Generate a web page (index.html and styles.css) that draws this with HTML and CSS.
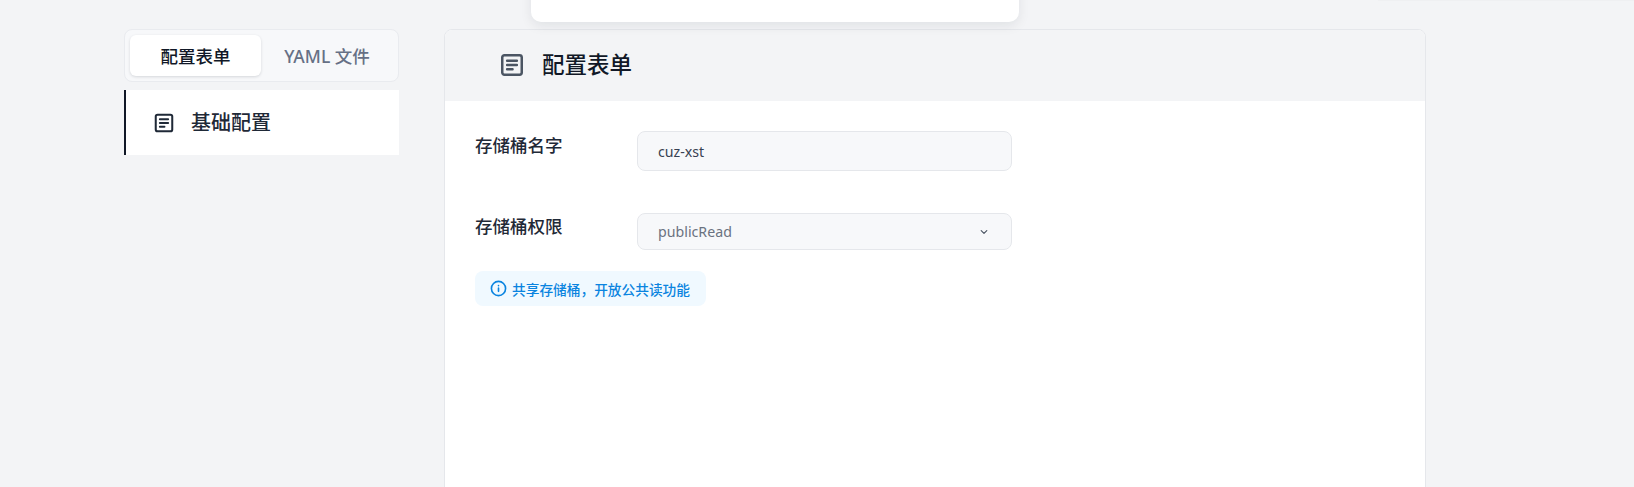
FILE: index.html
```html
<!DOCTYPE html>
<html lang="zh-CN">
<head>
<meta charset="utf-8">
<title>配置表单</title>
<link rel="stylesheet" href="styles.css">
</head>
<body>
<div class="popover"></div>
<div class="top-edge"></div>
<main class="layout">
  <aside class="sidebar">
    <div class="tabs">
      <button class="tab tab-active">配置表单</button>
      <button class="tab">YAML 文件</button>
    </div>
    <a class="nav-item">
      <svg class="nav-icon" viewBox="0 0 24 24" fill="none" stroke="currentColor" stroke-width="2.2" stroke-linecap="round" stroke-linejoin="round"><rect x="3" y="3" width="18" height="18" rx="2"/><path d="M7.5 8h9M7.5 12h9M7.5 16h5"/></svg>
      <span class="nav-text">基础配置</span>
    </a>
  </aside>
  <section class="panel">
    <header class="panel-head">
      <svg class="head-icon" viewBox="0 0 24 24" fill="none" stroke="currentColor" stroke-width="2.3" stroke-linecap="round" stroke-linejoin="round"><rect x="3" y="3" width="18" height="18" rx="2"/><path d="M7.5 8h9M7.5 12h9M7.5 16h5"/></svg>
      <h2 class="panel-title">配置表单</h2>
    </header>
    <div class="panel-body">
      <div class="row row-name">
        <label class="label">存储桶名字</label>
        <div class="field field-input">cuz-xst</div>
      </div>
      <div class="row row-perm">
        <label class="label">存储桶权限</label>
        <div class="field field-select">
          <span class="select-value">publicRead</span>
          <svg class="chevron" viewBox="0 0 20 20" fill="none" stroke="currentColor" stroke-width="1.7" stroke-linecap="round" stroke-linejoin="round"><path d="M6 8l4 4 4-4"/></svg>
        </div>
      </div>
      <div class="hint">
        <svg class="hint-icon" viewBox="0 0 24 24" fill="none" stroke="currentColor" stroke-width="2.3" stroke-linecap="round" stroke-linejoin="round"><circle cx="12" cy="12" r="10"/><path d="M12 16v-4.5M12 8h.01"/></svg>
        <span>共享存储桶，开放公共读功能</span>
      </div>
    </div>
  </section>
</main>
</body>
</html>
```
FILE: styles.css
```css
* { box-sizing: border-box; }
html, body { margin: 0; height: 100%; overflow: hidden; }
body {
  background: #f3f4f6;
  color: #111827;
  font-family: "Noto Sans", "Noto Sans CJK SC", sans-serif;
}
.popover {
  position: absolute;
  left: 531px;
  top: -40px;
  width: 488px;
  height: 62px;
  background: #fff;
  border-radius: 10px;
  box-shadow: 0 4px 12px rgba(17, 24, 39, .08);
}
.top-edge {
  position: absolute;
  right: 0;
  top: 0;
  width: 256px;
  height: 1px;
  background: #eff0f2;
}
.layout {
  display: flex;
  align-items: flex-start;
  gap: 45px;
  padding: 29px 0 0 124px;
}
.sidebar { width: 275px; flex: none; }
.tabs {
  display: flex;
  width: 275px;
  height: 53px;
  padding: 5px;
  background: #f7f8fa;
  border: 1px solid #e9ebef;
  border-radius: 8px;
}
.tab {
  flex: 1;
  border: 0;
  background: none;
  border-radius: 6px;
  font: 500 17.5px "Noto Sans", "Noto Sans CJK SC", sans-serif;
  color: #667085;
  padding: 0;
}
.tab-active {
  flex: 0 0 131px;
  background: #fff;
  color: #111827;
  box-shadow: 0 1px 3px rgba(17, 24, 39, .15);
}
.nav-item {
  display: flex;
  align-items: center;
  gap: 16px;
  height: 65px;
  margin-top: 8px;
  padding-left: 27px;
  background: #fff;
  border-left: 2px solid #111827;
  font-size: 20px;
  font-weight: 500;
  color: #1f2937;
}
.nav-icon { width: 22px; height: 22px; color: #1f2937; }
.nav-text { padding-bottom: 3px; }
.panel {
  width: 982px;
  height: 500px;
  background: #fff;
  border: 1px solid #e5e7eb;
  border-radius: 8px 8px 0 0;
  overflow: hidden;
}
.panel-head {
  display: flex;
  align-items: center;
  gap: 17px;
  height: 71px;
  padding-left: 54px;
  background: #f3f4f6;
}
.head-icon { width: 26px; height: 26px; margin-bottom: 1px; color: #4b5563; }
.panel-title { margin: 0; padding-bottom: 4px; font-size: 22.5px; font-weight: 500; color: #111827; }
.panel-body { padding: 30px 30px 0; }
.row { display: flex; align-items: flex-start; }
.row-perm { margin-top: 42px; }
.label {
  width: 162px;
  font-size: 17.5px;
  font-weight: 500;
  line-height: 28px;
  color: #1f2937;
}
.row-perm .label { line-height: 26px; }
.field {
  width: 375px;
  background: #f7f8fa;
  border: 1px solid #e5e7eb;
  border-radius: 8px;
  font-size: 14.2px;
  padding: 0 20px;
  display: flex;
  align-items: center;
}
.field-input { height: 40px; color: #374151; }
.field-select { height: 37px; color: #6b7280; justify-content: space-between; padding-right: 20px; }
.select-value { padding-bottom: 1px; }
.chevron { width: 14px; height: 14px; color: #4b5563; }
.hint {
  display: inline-flex;
  align-items: center;
  gap: 5px;
  height: 35px;
  margin-top: 21px;
  padding: 0 16px 0 15px;
  background: #f0f9ff;
  border-radius: 8px;
  color: #0a84e0;
  font-size: 13.7px;
  font-weight: 500;
}
.hint-icon { width: 17px; height: 17px; }
```
